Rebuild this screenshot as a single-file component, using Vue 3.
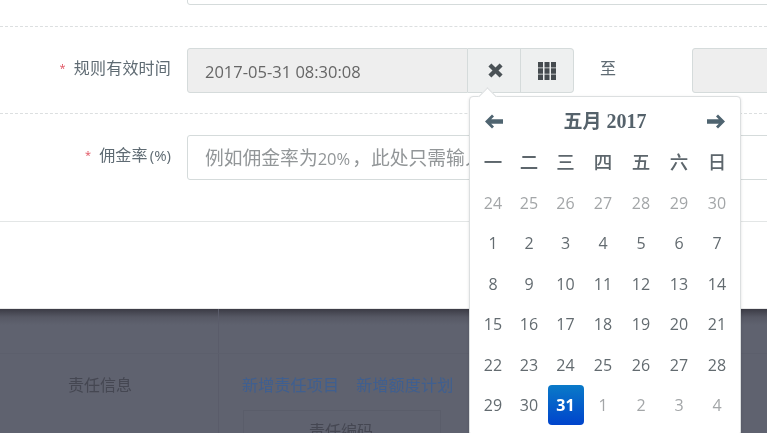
<script setup>
import { computed } from 'vue';

// 日历数据
const weekdays = ['一', '二', '三', '四', '五', '六', '日'];
const days = computed(() => {
  const list = [];
  for (let d = 24; d <= 30; d++) list.push({ label: d, muted: true });
  for (let d = 1; d <= 31; d++) list.push({ label: d, active: d === 31 });
  for (let d = 1; d <= 4; d++) list.push({ label: d, muted: true });
  return list;
});
</script>

<template>
  <div class="page">
    <div class="modal">
      <div class="row row-first">
        <div class="label"></div>
        <div class="input"></div>
      </div>
      <div class="row">
        <div class="label"><span class="star">*</span>规则有效时间</div>
        <div class="picker">
          <div class="input input-off">2017-05-31 08:30:08</div>
          <button class="addon addon-clear">
            <svg width="15" height="15" viewBox="0 0 15 15"><path d="M3.400.4 7.500 4.500 11.600.4 14.600 3.400 10.500 7.500 14.600 11.600 11.600 14.600 7.500 10.500 3.400 14.600.4 11.600 4.500 7.500.4 3.400Z" fill="#4a5256"/></svg>
          </button>
          <button class="addon addon-end">
            <svg width="18" height="18" viewBox="0 0 18 18" fill="#454b4f">
              <rect x="0" y="0" width="5" height="5.500"/><rect x="6.500" y="0" width="5" height="5.500"/><rect x="13" y="0" width="5" height="5.500"/>
              <rect x="0" y="6.250" width="5" height="5.500"/><rect x="6.500" y="6.250" width="5" height="5.500"/><rect x="13" y="6.250" width="5" height="5.500"/>
              <rect x="0" y="12.500" width="5" height="5.500"/><rect x="6.500" y="12.500" width="5" height="5.500"/><rect x="13" y="12.500" width="5" height="5.500"/>
            </svg>
          </button>
        </div>
        <div class="to">至</div>
        <div class="input input-off input-end"></div>
      </div>
      <div class="row row-last">
        <div class="label"><span class="star">*</span>佣金率<small>(%)</small></div>
        <div class="input input-hint"><span class="hint-text">例如佣金率为<span class="num">20%</span>，此处只需输入</span></div>
      </div>
      <div class="footer"></div>
    </div>

    <div class="backdrop">
      <div class="side">责任信息</div>
      <div class="main">
        <div class="links"><a>新增责任项目</a><a>新增额度计划</a></div>
        <div class="table-head"><span>责任编码</span></div>
      </div>
    </div>

    <div class="calendar">
      <div class="cal-title">
        <svg width="19" height="15" viewBox="0 0 19 15"><path d="M8 .5 10 2.500 7.200 5.300H19V9.700H7.200L10 12.500 8 14.500 1 7.500Z" fill="#4f6470"/></svg>
        <span class="cal-month">五月 <b>2017</b></span>
        <svg width="19" height="15" viewBox="0 0 19 15"><path d="M11 .5 9 2.500 11.800 5.300H0V9.700H11.800L9 12.500 11 14.500 18 7.500Z" fill="#4f6470"/></svg>
      </div>
      <div class="cal-grid">
        <div v-for="w in weekdays" :key="w" class="cal-week">{{ w }}</div>
        <div
          v-for="(d, i) in days"
          :key="i"
          class="cal-day"
          :class="{ muted: d.muted, active: d.active }"
        >{{ d.label }}</div>
      </div>
    </div>
  </div>
</template>

<style scoped>
.page {
  position: relative;
  width: 767px;
  height: 433px;
  overflow: hidden;
  font-family: "Open Sans", "Noto Sans CJK SC", sans-serif;
  font-size: 16px;
  color: #5f6b73;
  filter: blur(0.4px);
}

.modal {
  height: 370px;
  margin-top: -61px;
  background: #fff;
  border-bottom: 1px solid #e8e8e8;
  box-sizing: border-box;
  display: flex;
  flex-direction: column;
}

.row {
  display: flex;
  align-items: center;
  padding: 21px 0 20px;
  border-bottom: 1px dashed #dcdfe0;
  flex-shrink: 0;
}

.row-first {
  padding-bottom: 21px;
}

.row-last {
  padding-bottom: 41px;
  border-bottom: 1px solid #e3e6e6;
}

.footer {
  flex: 1;
}

.label {
  width: 171px;
  margin-right: 16px;
  flex-shrink: 0;
  text-align: right;
  line-height: 24px;
  letter-spacing: 0.2px;
  position: relative;
  top: -2px;
}

.label small {
  font-size: 15px;
  margin-left: 2px;
  letter-spacing: 0;
}

.star {
  color: #e0505f;
  font-size: 11px;
  margin-right: 8px;
  position: relative;
  top: -2px;
}

.input {
  flex: 1;
  height: 45px;
  box-sizing: border-box;
  padding: 0 17px;
  line-height: 45px;
  font-size: 16.500px;
  border: 1px solid #d5dbdb;
  border-radius: 3px;
  background: #fff;
  color: #666;
  white-space: nowrap;
  overflow: hidden;
  min-width: 600px;
}

.input-off {
  background: #eeeeee;
  border-radius: 3px 0 0 3px;
  width: 281px;
  min-width: 0;
  flex: none;
}

.input-hint {
  color: #929698;
  font-size: 18.800px;
}

.hint-text {
  display: block;
  width: 264px;
  overflow: hidden;
}

.num {
  font-size: 16.500px;
  margin-right: 2px;
}

.input-end {
  width: 120px;
  border-radius: 3px;
}

.picker {
  display: flex;
  flex-shrink: 0;
}

.addon {
  width: 53px;
  height: 45px;
  padding: 0;
  display: flex;
  align-items: center;
  justify-content: center;
  background: #eef0f0;
  border: 1px solid #d5dbdb;
  border-left: 0;
}

.addon-clear {
  padding-left: 2px;
}

.addon-end {
  border-radius: 0 4px 4px 0;
}

.to {
  width: 118px;
  padding-left: 26px;
  box-sizing: border-box;
  flex-shrink: 0;
  position: relative;
  top: -4px;
}

.backdrop {
  position: relative;
  height: 124px;
  background: linear-gradient(#3b3b45 0, #565864 8px, #5f626f 16px);
  display: flex;
  overflow: hidden;
  color: #454752;
}

.backdrop::after {
  content: "";
  position: absolute;
  left: 0;
  right: 0;
  top: 44px;
  height: 1px;
  background: #5c5f6c;
}

.side {
  width: 219px;
  padding: 64px 0 0 68px;
  box-sizing: border-box;
  border-right: 1px solid #5a5c6a;
  line-height: 24px;
}

.main {
  flex: 1;
  padding: 64px 0 0 23px;
}

.links {
  display: flex;
  gap: 17px;
  line-height: 24px;
  letter-spacing: 0.2px;
  color: #3f5f90;
}

.table-head {
  width: 198px;
  height: 60px;
  margin: 13px 0 0 1px;
  box-sizing: border-box;
  border: 1px solid #5a5d6a;
  border-bottom: 0;
  padding: 8px 0 0 65px;
  line-height: 24px;
}

.calendar {
  position: absolute;
  left: 469px;
  top: 96px;
  width: 272px;
  height: 340px;
  box-sizing: border-box;
  padding: 0 5px;
  background: #fff;
  border: 1px solid #dcdfe0;
  border-radius: 4px;
  box-shadow: 0 1px 3px rgba(0, 0, 0, 0.12);
}

.calendar::before {
  content: "";
  position: absolute;
  left: 11px;
  top: -7px;
  width: 12px;
  height: 12px;
  background: #fff;
  border-left: 1px solid #dcdfe0;
  border-top: 1px solid #dcdfe0;
  transform: rotate(45deg);
}

.cal-title {
  height: 39px;
  padding: 5px 9px 0;
  display: flex;
  align-items: center;
  justify-content: space-between;
  font-size: 19px;
  font-weight: 700;
  color: #55626b;
}

.cal-month {
  margin-bottom: 3px;
}

.cal-title b {
  font-family: "Liberation Serif", serif;
  font-size: 20px;
}

.cal-grid {
  display: grid;
  grid-template-columns: 36px 36px 37px 38px 38px 38px 38px;
  grid-template-rows: 40.500px;
  grid-auto-rows: 40.500px;
  row-gap: 0;
}

.cal-week {
  display: flex;
  align-items: center;
  justify-content: center;
  font-size: 18.500px;
  font-weight: 500;
  color: #5d666c;
  margin-bottom: 1px;
}

.cal-day {
  display: flex;
  align-items: center;
  justify-content: center;
  height: 40px;
  color: #636b70;
  position: relative;
  top: 1px;
}

.cal-day.muted {
  color: #a3a6a8;
}

.cal-day.active {
  width: 36px;
  justify-self: center;
  color: #fff;
  font-weight: 700;
  border-radius: 4px;
  background: linear-gradient(#0a7ac8, #0044cc);
}
</style>

<style>
html, body {
  background: #fff;
}
</style>
